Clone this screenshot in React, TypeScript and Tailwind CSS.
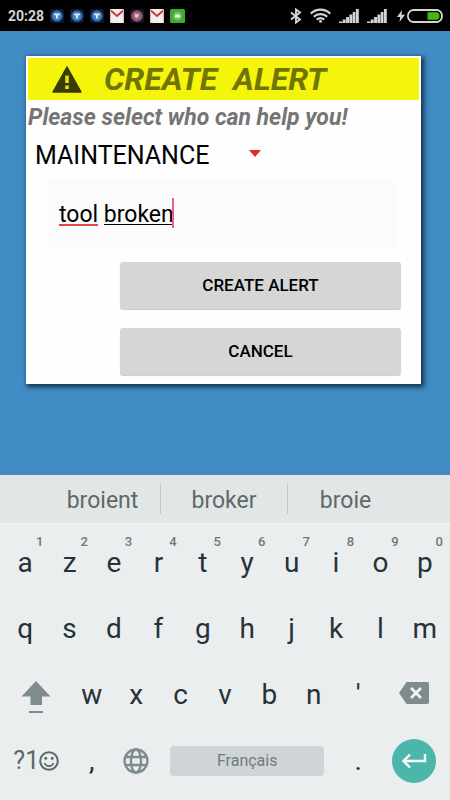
import { useState } from "react";
import clsx from "clsx";

const TOP_ROW = ["a", "z", "e", "r", "t", "y", "u", "i", "o", "p"];
const HOME_ROW = ["q", "s", "d", "f", "g", "h", "j", "k", "l", "m"];
const BOTTOM_ROW = ["w", "x", "c", "v", "b", "n", "'"];
const SUGGESTIONS = ["broient", "broker", "broie"];

function AppBadge() {
  return (
    <svg viewBox="0 0 14 14" className="size-3.5" aria-hidden="true">
      <rect width="14" height="14" rx="2" fill="#0d1830" />
      <circle cx="7" cy="7" r="5.8" fill="#2f6aa6" />
      <circle cx="7" cy="7" r="4" fill="#4584bd" />
      <path d="M4 4.6h6v1.6H8v3.4H6V6.2H4z" fill="#dbe9f4" />
    </svg>
  );
}

function MailBadge() {
  return (
    <svg viewBox="0 0 14 14" className="size-3.5" aria-hidden="true">
      <rect width="14" height="14" rx="1" fill="#f4eeee" />
      <path d="M0.8 1.5L7 7l6.2-5.5" fill="none" stroke="#c23b38" strokeWidth="1.8" />
      <path d="M0.6 1v12M13.4 1v12" stroke="#e3b9b6" strokeWidth="1" />
    </svg>
  );
}

function ShieldBadge() {
  return (
    <svg viewBox="0 0 14 14" className="size-3.5" aria-hidden="true">
      <rect width="14" height="14" rx="2" fill="#12162e" />
      <circle cx="7" cy="7" r="5.8" fill="#b34a4a" />
      <circle cx="7" cy="7" r="3.4" fill="#6f7fb0" />
      <path d="M5 4.5l4 1-1.5 3.5-2.5-1z" fill="#e3c3c8" />
    </svg>
  );
}

function RobotBadge() {
  return (
    <svg viewBox="0 0 15 14" className="h-3.5 w-[15px]" aria-hidden="true">
      <rect width="15" height="14" rx="1.5" fill="#43a832" />
      <circle cx="7.5" cy="7" r="4.5" fill="#6cc25c" />
      <path d="M4.8 8.5a2.7 2.9 0 0 1 5.4 0z" fill="#eef8ec" />
      <path d="M5.5 4.8l.8 1.2M9.5 4.8l-.8 1.2" stroke="#eef8ec" strokeWidth=".6" />
    </svg>
  );
}

function SignalIcon() {
  return (
    <svg viewBox="0 0 20 14" className="h-3.5 w-5" fill="#d4d4d4" aria-hidden="true">
      <path d="M0 12.5h3.3V14H0zM3.7 10.5h3V14h-3zM7.1 8H10v6H7.1zM10.4 5.5h2.9V14h-2.9zM13.7 3h2.7v11h-2.7zM16.9 0h2.9v14h-2.9z" />
    </svg>
  );
}

function StatusBar() {
  return (
    <header className="flex h-[31px] items-center justify-between bg-black pl-2 pr-[7px] text-[#d4d4d4]">
      <div className="flex items-center gap-1.5">
        <span className="text-sm font-bold">20:28</span>
        <AppBadge />
        <AppBadge />
        <AppBadge />
        <MailBadge />
        <ShieldBadge />
        <MailBadge />
        <RobotBadge />
      </div>
      <div className="flex items-center">
        <svg viewBox="0 0 12 16" className="mr-2 h-4 w-3" fill="none" stroke="#d4d4d4" strokeWidth="1.9" aria-hidden="true">
          <path d="M1 4.5l9 7-4 3V1.5l4 3-9 7" />
        </svg>
        <svg viewBox="0 0 20 14" className="mr-2 h-[15px] w-[21px]" fill="none" stroke="#d4d4d4" strokeWidth="2.2" aria-hidden="true">
          <path d="M.7 5.2a13.2 13.2 0 0 1 18.6 0M3.6 8.2a9.2 9.2 0 0 1 12.8 0M6.5 11a5.2 5.2 0 0 1 7 0" />
          <circle cx="10" cy="12.6" r="1.4" fill="#d4d4d4" stroke="none" />
        </svg>
        <div className="mr-2.5 flex gap-2">
          <SignalIcon />
          <SignalIcon />
        </div>
        <svg viewBox="0 0 8 14" className="mr-0.5 h-3.5 w-2" fill="#d4d4d4" aria-hidden="true">
          <path d="M5 1L0 8h3.2L2.5 13 8 5.8H4.5z" />
        </svg>
        <svg viewBox="0 0 36 14" className="h-3.5 w-9" aria-hidden="true">
          <rect x="1" y="1" width="34" height="12" rx="5.5" fill="none" stroke="#d4d4d4" strokeWidth="1.8" />
          <path d="M20.5 3.2H30a3 3.8 0 0 1 2.5 3.8a3 3.8 0 0 1-2.5 3.8h-9.5z" fill="#43b814" />
        </svg>
      </div>
    </header>
  );
}

function AlertForm() {
  const [target, setTarget] = useState("MAINTENANCE");
  const [message, setMessage] = useState("tool broken");

  return (
    <form
      onSubmit={(e) => e.preventDefault()}
      className="flex flex-col bg-[#fefefe] p-0.5 pb-[9px] shadow-[2px_2px_5px_1px_#10304a]"
    >
      <h1 className="flex h-[42px] items-center bg-[#f4f50a] pl-6 text-[32px] font-bold italic text-[#727400]">
        <svg viewBox="0 0 30 27" className="mr-[22px] h-[27px] w-[30px]" aria-hidden="true">
          <path d="M15 1L29 26H1z" fill="#3a3b06" stroke="#3a3b06" strokeWidth="1.5" strokeLinejoin="round" />
          <path d="M13.2 9.5h3.6V17h-3.6zM13.2 19.5h3.6v3.6h-3.6z" fill="#e0e20c" />
        </svg>
        <span className="whitespace-pre">CREATE  ALERT</span>
      </h1>
      <label htmlFor="target" className="h-[34px] text-[23px] font-bold italic leading-9 text-[#757575]">
        Please select who can help you!
      </label>

      <div className="flex h-[43px] items-center pl-[7px]">
        <select
          id="target"
          value={target}
          onChange={(e) => setTarget(e.target.value)}
          className="w-[214px] appearance-none bg-transparent text-[25px] text-black"
        >
          <option>MAINTENANCE</option>
        </select>
        <svg viewBox="0 0 12 7" className="mb-1 h-[7px] w-3" aria-hidden="true">
          <path d="M0 0h12L6 7z" fill="#e12a2a" />
        </svg>
      </div>

      <div className="relative ml-5 mr-[23px] mt-[3px] h-[68px] bg-[#fbfbfb]">
        <input
          type="text"
          aria-label="Message"
          value={message}
          spellCheck={false}
          onChange={(e) => setMessage(e.target.value)}
          className="size-full bg-transparent pl-[11px] text-[23px] text-black outline-none"
        />
        {/* spelling mark, composing underline and caret */}
        <span className="absolute left-[11px] top-11 h-0.5 w-[39px] bg-[#e04848]" />
        <span className="absolute left-14 top-11 h-px w-[68px] bg-black" />
        <span className="absolute left-[124px] top-[18px] h-[30px] w-0.5 bg-[#ee5c9a]" />
      </div>

      <div className="ml-[92px] mr-[18px] mt-3.5 flex flex-col gap-[19px]">
        <button
          type="submit"
          className="h-[47px] rounded-[3px] bg-[#d6d6d6] text-[17px] font-medium text-black shadow-[0_1px_1px_#cccccc]"
        >
          CREATE ALERT
        </button>
        <button
          type="button"
          className="h-[47px] rounded-[3px] bg-[#d6d6d6] text-[17px] font-medium text-black shadow-[0_1px_1px_#cccccc]"
        >
          CANCEL
        </button>
      </div>
    </form>
  );
}

function Key({ label, hint }: { label: string; hint?: string }) {
  return (
    <button type="button" className="relative col-span-2 flex items-center justify-center">
      {label}
      {hint && (
        <span className="absolute right-1 top-1 text-[13px] font-medium leading-4 text-[#6f7777]">{hint}</span>
      )}
    </button>
  );
}

function Keyboard() {
  return (
    <section className="bg-[#eaeeee] text-[#263238]">
      <div className="grid h-[49px] grid-cols-[1fr_128px_1fr] items-center border-b border-[#f4f7f7] bg-[#e2e6e6] pl-[45px] pr-[47px]">
        {SUGGESTIONS.map((word, i) => (
          <button
            key={word}
            type="button"
            className={clsx("h-[30px] text-[23px] leading-[34px] text-[#5f6868]", i === 1 && "border-x border-[#c3c9cb]")}
          >
            {word}
          </button>
        ))}
      </div>

      <div className="grid auto-rows-[66px] grid-cols-[repeat(20,minmax(0,1fr))] px-[3px] py-1.5 text-[28px]">
        {TOP_ROW.map((k, i) => (
          <Key key={k} label={k} hint={String((i + 1) % 10)} />
        ))}
        {HOME_ROW.map((k) => (
          <Key key={k} label={k} />
        ))}

        <button type="button" aria-label="Shift" className="col-span-3 flex items-center justify-center pt-1">
          <svg viewBox="0 0 30 34" className="h-[34px] w-[30px]" fill="#7e8c8f" aria-hidden="true">
            <path d="M15 1L29.5 16.500H21V25H9.500V16.500H.5zM8 31h14v2H8z" />
          </svg>
        </button>
        {BOTTOM_ROW.map((k) => (
          <Key key={k} label={k} />
        ))}
        <button type="button" aria-label="Backspace" className="col-span-3 flex items-center justify-center pb-1">
          <svg viewBox="0 0 30 22" className="h-[22px] w-[30px]" aria-hidden="true">
            <path d="M7.5 0H28q2 0 2 2v18q0 2-2 2H7.500L0 11z" fill="#7e8c8f" />
            <path d="M12 6l10 10M22 6L12 16" stroke="#f2f5f5" strokeWidth="2.8" />
          </svg>
        </button>

        <button
          type="button"
          aria-label="Symbols and emoji"
          className="col-span-3 flex items-center justify-center text-[25px] text-[#5d6869]"
        >
          ?1
          <svg viewBox="0 0 20 20" className="size-5" fill="none" stroke="#5d6869" strokeWidth="2" aria-hidden="true">
            <circle cx="10" cy="10" r="8.8" />
            <path d="M5.5 12a4.8 4.8 0 0 0 9 0" strokeWidth="1.6" />
            <circle cx="6.8" cy="7.3" r="1.5" fill="#5d6869" stroke="none" />
            <circle cx="13.2" cy="7.3" r="1.5" fill="#5d6869" stroke="none" />
          </svg>
        </button>
        <Key label="," />
        <button type="button" aria-label="Language" className="col-span-2 flex items-center justify-center">
          <svg viewBox="0 0 26 26" className="size-[26px]" fill="none" stroke="#7e8c8f" strokeWidth="2.4" aria-hidden="true">
            <circle cx="13" cy="13" r="11.5" />
            <ellipse cx="13" cy="13" rx="5" ry="11.5" />
            <path d="M2.5 9h21M2.5 17h21" />
          </svg>
        </button>
        <button type="button" className="col-span-8 mx-3 h-[30px] self-center rounded bg-[#cfd4d6] text-base text-[#727c7f]">
          Français
        </button>
        <Key label="." />
        <div className="col-span-3 flex items-center justify-center">
          <button
            type="button"
            aria-label="Enter"
            className="flex size-11 items-center justify-center rounded-full bg-[#4db6ab]"
          >
            <svg viewBox="0 0 26 16" className="h-4 w-[26px]" fill="none" stroke="#fbffff" strokeWidth="2.4" aria-hidden="true">
              <path d="M24 1v7H3M9 1.5L2.500 8L9 14.500" />
            </svg>
          </button>
        </div>
      </div>
    </section>
  );
}

export default function App() {
  return (
    <div className="flex min-h-screen flex-col bg-[#428cc6] font-[Roboto,sans-serif]">
      <StatusBar />
      <main className="grow pl-[26px] pr-[29px] pt-[25px]">
        <AlertForm />
      </main>
      <Keyboard />
    </div>
  );
}
